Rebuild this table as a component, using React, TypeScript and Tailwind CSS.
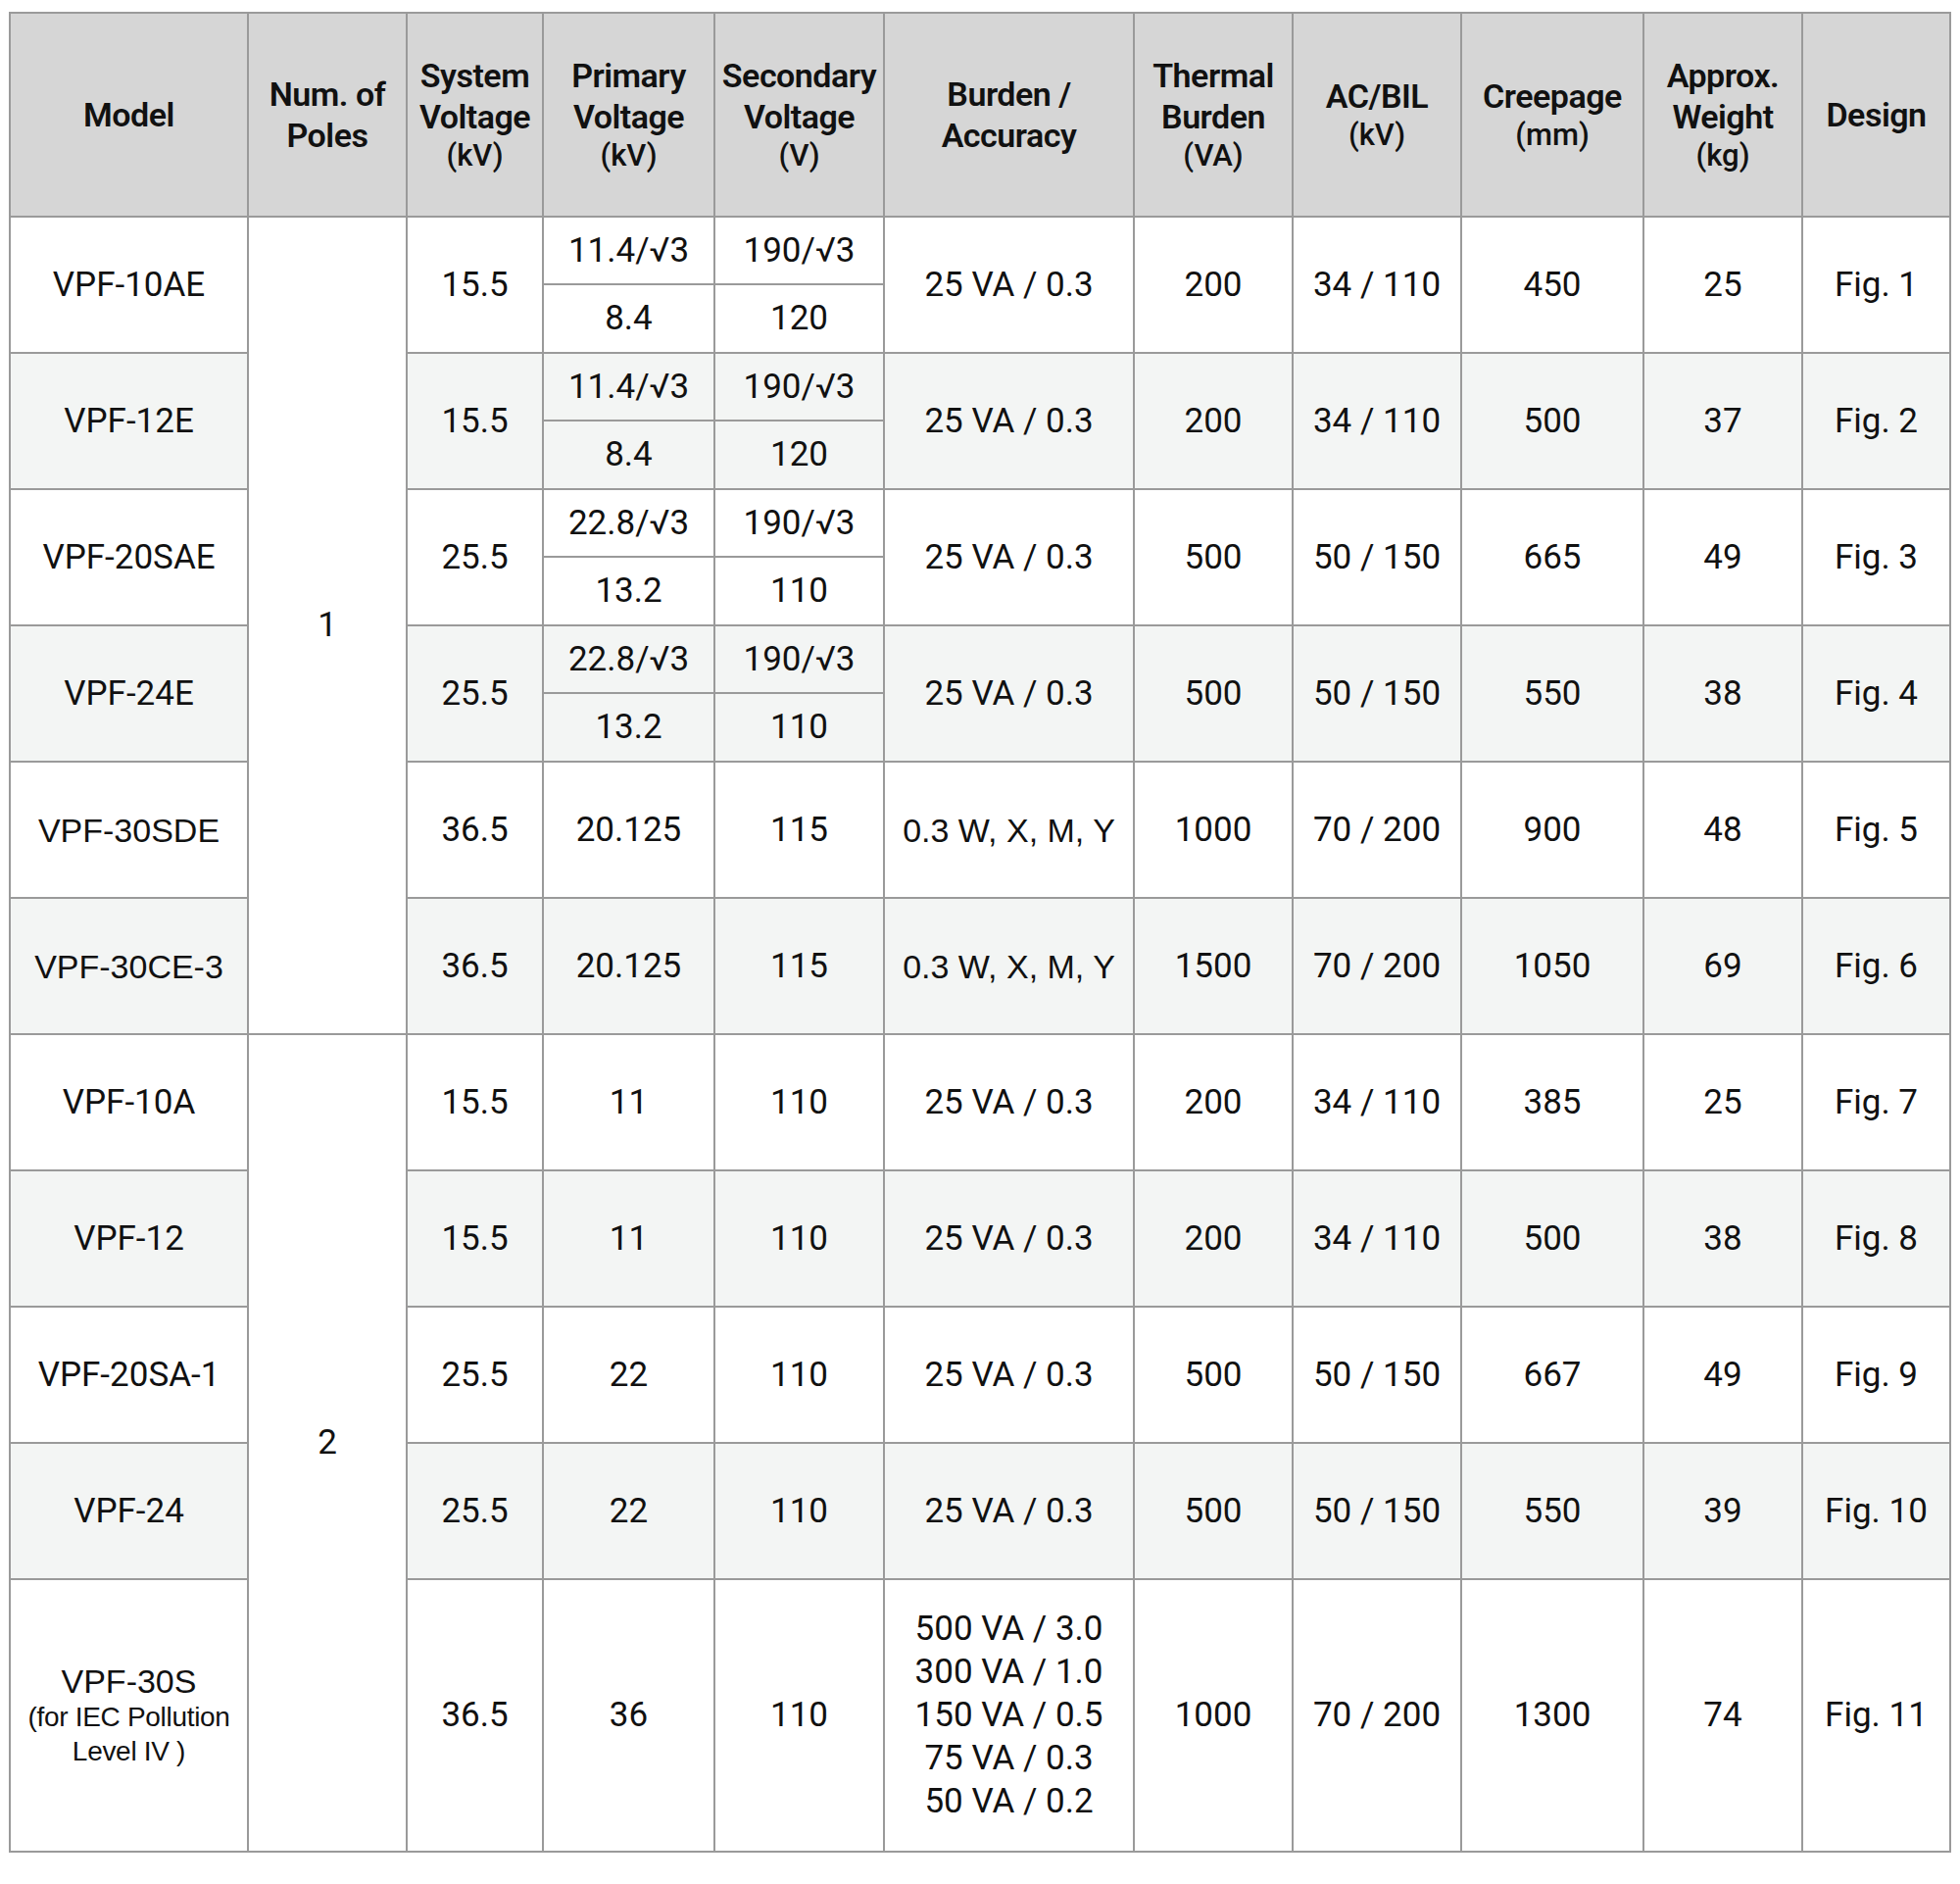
import React from "react";

type Row = {
  model: string;
  note?: string[];
  modelArial?: boolean;
  sys: string;
  prim: string[];
  sec: string[];
  burden: string[];
  burdenArial?: boolean;
  thermal: string;
  ac: string;
  creep: string;
  weight: string;
  fig: string;
};

const rows: Row[] = [
  { model: "VPF-10AE", sys: "15.5", prim: ["11.4/√3", "8.4"], sec: ["190/√3", "120"], burden: ["25 VA / 0.3"], thermal: "200", ac: "34 / 110", creep: "450", weight: "25", fig: "Fig. 1" },
  { model: "VPF-12E", sys: "15.5", prim: ["11.4/√3", "8.4"], sec: ["190/√3", "120"], burden: ["25 VA / 0.3"], thermal: "200", ac: "34 / 110", creep: "500", weight: "37", fig: "Fig. 2" },
  { model: "VPF-20SAE", sys: "25.5", prim: ["22.8/√3", "13.2"], sec: ["190/√3", "110"], burden: ["25 VA / 0.3"], thermal: "500", ac: "50 / 150", creep: "665", weight: "49", fig: "Fig. 3" },
  { model: "VPF-24E", sys: "25.5", prim: ["22.8/√3", "13.2"], sec: ["190/√3", "110"], burden: ["25 VA / 0.3"], thermal: "500", ac: "50 / 150", creep: "550", weight: "38", fig: "Fig. 4" },
  { model: "VPF-30SDE", modelArial: true, sys: "36.5", prim: ["20.125"], sec: ["115"], burden: ["0.3 W, X, M, Y"], burdenArial: true, thermal: "1000", ac: "70 / 200", creep: "900", weight: "48", fig: "Fig. 5" },
  { model: "VPF-30CE-3", modelArial: true, sys: "36.5", prim: ["20.125"], sec: ["115"], burden: ["0.3 W, X, M, Y"], burdenArial: true, thermal: "1500", ac: "70 / 200", creep: "1050", weight: "69", fig: "Fig. 6" },
  { model: "VPF-10A", sys: "15.5", prim: ["11"], sec: ["110"], burden: ["25 VA / 0.3"], thermal: "200", ac: "34 / 110", creep: "385", weight: "25", fig: "Fig. 7" },
  { model: "VPF-12", sys: "15.5", prim: ["11"], sec: ["110"], burden: ["25 VA / 0.3"], thermal: "200", ac: "34 / 110", creep: "500", weight: "38", fig: "Fig. 8" },
  { model: "VPF-20SA-1", sys: "25.5", prim: ["22"], sec: ["110"], burden: ["25 VA / 0.3"], thermal: "500", ac: "50 / 150", creep: "667", weight: "49", fig: "Fig. 9" },
  { model: "VPF-24", sys: "25.5", prim: ["22"], sec: ["110"], burden: ["25 VA / 0.3"], thermal: "500", ac: "50 / 150", creep: "550", weight: "39", fig: "Fig. 10" },
  {
    model: "VPF-30S",
    note: ["(for IEC Pollution", "Level IV )"],
    sys: "36.5",
    prim: ["36"],
    sec: ["110"],
    burden: ["500 VA / 3.0", "300 VA / 1.0", "150 VA / 0.5", "75 VA / 0.3", "50 VA / 0.2"],
    thermal: "1000",
    ac: "70 / 200",
    creep: "1300",
    weight: "74",
    fig: "Fig. 11",
  },
];

const widths = [243, 162, 139, 175, 173, 255, 162, 172, 186, 162, 151];

const plex = "font-['Roboto','Inter',sans-serif]";
const arial = "font-['Liberation_Sans','Arial',sans-serif]";

const th = "border-2 border-[#9a9a9a] bg-[#d6d6d6] text-center align-middle px-1 font-semibold text-[34px] leading-[42px] tracking-[-0.5px] text-[#111]";
const td = "border-2 border-[#9a9a9a] text-center align-middle px-1 text-[35px] leading-[40px] text-[#111]";

function Head({ lines, unit }: { lines: string[]; unit?: string }) {
  return (
    <th className={th}>
      {lines.map((l) => (
        <div key={l}>{l}</div>
      ))}
      {unit && <div className="text-[31px] font-medium leading-[38px] tracking-normal">{unit}</div>}
    </th>
  );
}

export default function App() {
  return (
    <div className={`bg-white w-[2000px] h-[1922px] pl-[9px] pt-[12px] ${plex}`}>
      <table className="border-collapse table-fixed w-[1981px]">
        <colgroup>
          {widths.map((w, i) => (
            <col key={i} style={{ width: w }} />
          ))}
        </colgroup>
        <thead>
          <tr className="h-[208px]">
            <Head lines={["Model"]} />
            <Head lines={["Num. of", "Poles"]} />
            <Head lines={["System", "Voltage"]} unit="(kV)" />
            <Head lines={["Primary", "Voltage"]} unit="(kV)" />
            <Head lines={["Secondary", "Voltage"]} unit="(V)" />
            <Head lines={["Burden /", "Accuracy"]} />
            <Head lines={["Thermal", "Burden"]} unit="(VA)" />
            <Head lines={["AC/BIL"]} unit="(kV)" />
            <Head lines={["Creepage"]} unit="(mm)" />
            <Head lines={["Approx.", "Weight"]} unit="(kg)" />
            <Head lines={["Design"]} />
          </tr>
        </thead>
        <tbody>
          {rows.map((r, i) => {
            const bg = i % 2 === 1 ? "bg-[#f3f5f4]" : "bg-white";
            const split = r.prim.length === 2;
            const span = split ? 2 : 1;
            const tall = i === rows.length - 1;
            const poles =
              i === 0 ? (
                <td rowSpan={10} className={`${td} bg-white`}>1</td>
              ) : i === 6 ? (
                <td rowSpan={5} className={`${td} bg-white`}>2</td>
              ) : null;
            const first = (
              <tr key={r.model} className={`${bg} ${split ? "h-[69px]" : tall ? "h-[278px]" : "h-[139px]"}`}>
                <td rowSpan={span} className={td}>
                  <div className={r.modelArial ? `${arial} text-[34px]` : r.note ? `${arial} text-[34px] leading-[37px]` : ""}>
                    {r.model}
                  </div>
                  {r.note &&
                    r.note.map((n) => (
                      <div key={n} className={`${arial} text-[28px] leading-[35px] tracking-[-0.3px]`}>
                        {n}
                      </div>
                    ))}
                </td>
                {poles}
                <td rowSpan={span} className={td}>{r.sys}</td>
                <td className={td}>{r.prim[0]}</td>
                <td className={td}>{r.sec[0]}</td>
                <td rowSpan={span} className={td}>
                  {r.burden.map((b) => (
                    <div
                      key={b}
                      className={r.burdenArial ? `${arial} text-[34px]` : r.burden.length > 1 ? "leading-[44px]" : ""}
                    >
                      {b}
                    </div>
                  ))}
                </td>
                <td rowSpan={span} className={td}>{r.thermal}</td>
                <td rowSpan={span} className={td}>{r.ac}</td>
                <td rowSpan={span} className={td}>{r.creep}</td>
                <td rowSpan={span} className={td}>{r.weight}</td>
                <td rowSpan={span} className={td}>{r.fig}</td>
              </tr>
            );
            if (!split) return first;
            return (
              <React.Fragment key={r.model}>
                {first}
                <tr className={`${bg} h-[70px]`}>
                  <td className={td}>{r.prim[1]}</td>
                  <td className={td}>{r.sec[1]}</td>
                </tr>
              </React.Fragment>
            );
          })}
        </tbody>
      </table>
    </div>
  );
}
